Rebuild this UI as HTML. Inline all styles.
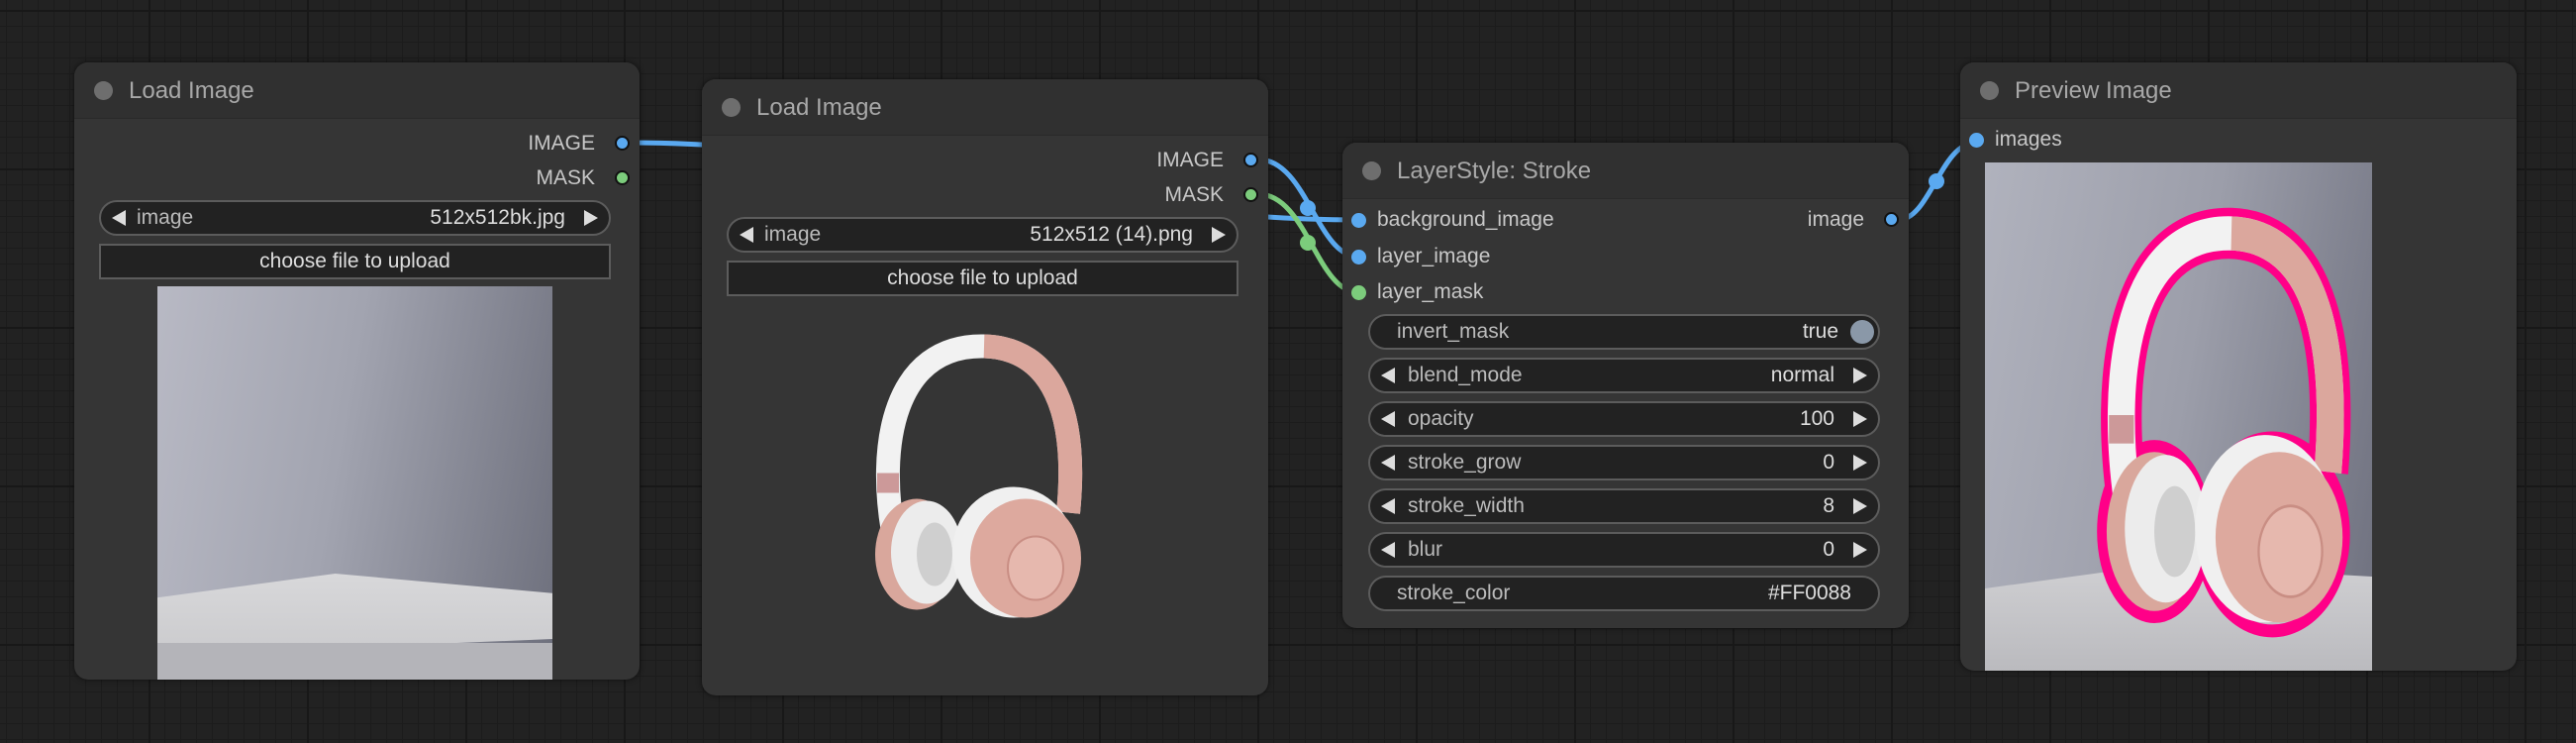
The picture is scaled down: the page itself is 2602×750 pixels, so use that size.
<!DOCTYPE html>
<html><head><meta charset="utf-8"><style>
*{box-sizing:border-box;margin:0;padding:0}
body{width:2602px;height:750px;overflow:hidden;background:#222;font-family:"Liberation Sans",Arial,sans-serif;position:relative;
background-image:linear-gradient(#181818 2px,transparent 2px),linear-gradient(90deg,#181818 2px,transparent 2px),linear-gradient(#1c1c1c 1px,transparent 1px),linear-gradient(90deg,#1c1c1c 1px,transparent 1px);
background-size:160px 160px,160px 160px,16px 16px,16px 16px;background-position:-10px 10px,-10px 10px,-10px 10px,-10px 10px}
svg{overflow:visible}
.node{position:absolute;background:#353535;border-radius:14px;box-shadow:0 0 6px rgba(0,0,0,.6);overflow:hidden}
.title{height:57px;background:#303030;border-bottom:1px solid #2a2a2a;color:#a8a8a8;font-size:24px;line-height:57px;padding-left:55px;position:relative}
.title:before{content:"";position:absolute;left:20px;top:19px;width:19px;height:19px;border-radius:50%;background:#6e6e6e}
.lbl{position:absolute;color:#c8c8c8;font-size:21px;line-height:24px}
.dot{position:absolute;width:15px;height:15px;border-radius:50%;border:2px solid #111}
.b{background:#5aa9f0}.g{background:#7ccc7c}
.w{position:absolute;height:36px;border:2px solid #5c5c5c;border-radius:18px;background:#222;color:#c8c8c8;font-size:21px;line-height:32px}
.w .l{position:absolute;left:38px;color:#bbb}.w .v{position:absolute;right:44px;color:#ddd}
.w .al{position:absolute;left:11px;top:8px;width:0;height:0;border-top:8px solid transparent;border-bottom:8px solid transparent;border-right:14px solid #ddd}
.w .ar{position:absolute;right:11px;top:8px;width:0;height:0;border-top:8px solid transparent;border-bottom:8px solid transparent;border-left:14px solid #ddd}
.btn{position:absolute;height:36px;border:2px solid #5c5c5c;background:#222;color:#ddd;font-size:21px;line-height:32px;text-align:center}
</style></head><body>
<svg width="2602" height="750" style="position:absolute;left:0;top:0">
<g fill="none" stroke-width="5">
<path d="M636 144 C 900 144, 1100 222, 1372 222" stroke="#5aa9f0"/>
<path d="M1271 161 C 1320 161, 1330 259, 1372 259" stroke="#5aa9f0"/>
<path d="M1271 196 C 1320 196, 1330 295, 1372 295" stroke="#7ccc7c"/>
<path d="M1917 222 C 1950 222, 1960 144, 1996 144" stroke="#5aa9f0"/>
</g>
<circle cx="1321" cy="210" r="8" fill="#5aa9f0"/><circle cx="1321" cy="245" r="8" fill="#7ccc7c"/>
<circle cx="1956" cy="183" r="8" fill="#5aa9f0"/>
<defs>
<symbol id="hp" viewBox="0 0 240 300" overflow="visible" preserveAspectRatio="none">
<path d="M40 220 C 20 120, 40 20, 130 22 C 200 24, 225 90, 215 190" fill="none" stroke="#f2f2f2" stroke-width="24"/>
<path d="M130 22 C 200 24, 225 90, 215 190" fill="none" stroke="#dba79d" stroke-width="24"/>
<rect x="22" y="150" width="22" height="20" fill="#c99" />
<ellipse cx="62" cy="232" rx="42" ry="56" fill="#d9a79c"/>
<ellipse cx="72" cy="230" rx="36" ry="52" fill="#ececec"/>
<ellipse cx="80" cy="232" rx="18" ry="32" fill="#cfcfcf"/>
<ellipse cx="160" cy="230" rx="62" ry="66" fill="#f0f0f0"/>
<ellipse cx="172" cy="236" rx="56" ry="60" fill="#dda99e"/>
<ellipse cx="182" cy="246" rx="28" ry="32" fill="#e6b8ae" stroke="#c98e84" stroke-width="2"/>
</symbol>
</defs>
</svg>

<div class="node" style="left:75px;top:63px;width:571px;height:623px">
<div class="title">Load Image</div>
<div class="lbl" style="right:45px;top:70px">IMAGE</div><div class="dot b" style="right:10px;top:74px"></div>
<div class="lbl" style="right:45px;top:105px">MASK</div><div class="dot g" style="right:10px;top:109px"></div>
<div class="w" style="left:25px;top:139px;width:517px"><div class="al"></div><span class="l" style="left:36px">image</span><span class="v">512x512bk.jpg</span><div class="ar"></div></div>
<div class="btn" style="left:25px;top:183px;width:517px">choose file to upload</div>
<div style="position:absolute;left:84px;top:226px;width:399px;height:397px;background:linear-gradient(100deg,#b8b9c4 0%,#a2a4b0 45%,#6d6f7c 100%);overflow:hidden">
<div style="position:absolute;left:0;top:290px;width:399px;height:110px;background:linear-gradient(#d8d8da,#c6c6c9);clip-path:polygon(0 22%,45% 0,100% 18%,100% 60%,0 75%)"></div>
<div style="position:absolute;left:0;top:360px;width:399px;height:40px;background:#b4b4b9"></div>
</div>
</div>

<div class="node" style="left:709px;top:80px;width:572px;height:622px">
<div class="title">Load Image</div>
<div class="lbl" style="right:45px;top:70px">IMAGE</div><div class="dot b" style="right:10px;top:74px"></div>
<div class="lbl" style="right:45px;top:105px">MASK</div><div class="dot g" style="right:10px;top:109px"></div>
<div class="w" style="left:25px;top:139px;width:517px"><div class="al"></div><span class="l" style="left:36px">image</span><span class="v">512x512 (14).png</span><div class="ar"></div></div>
<div class="btn" style="left:25px;top:183px;width:517px">choose file to upload</div>
<svg style="position:absolute;left:155px;top:245px" width="240" height="305" viewBox="0 0 240 300"><use href="#hp" width="240" height="300"/></svg>
</div>

<div class="node" style="left:1356px;top:144px;width:572px;height:490px">
<div class="title">LayerStyle: Stroke</div>
<div class="dot b" style="left:9px;top:71px;border:none"></div><div class="lbl" style="left:35px;top:66px">background_image</div>
<div class="lbl" style="right:45px;top:66px">image</div><div class="dot b" style="right:10px;top:70px"></div>
<div class="dot b" style="left:9px;top:108px;border:none"></div><div class="lbl" style="left:35px;top:103px">layer_image</div>
<div class="dot g" style="left:9px;top:144px;border:none"></div><div class="lbl" style="left:35px;top:139px">layer_mask</div>
<div class="w" style="left:26px;top:173px;width:517px"><span class="l" style="left:27px">invert_mask</span><span class="v" style="right:40px">true</span><div style="position:absolute;right:4px;top:4px;width:24px;height:24px;border-radius:50%;background:#8a98a8"></div></div>
<div class="w" style="left:26px;top:217px;width:517px"><div class="al"></div><span class="l">blend_mode</span><span class="v">normal</span><div class="ar"></div></div>
<div class="w" style="left:26px;top:261px;width:517px"><div class="al"></div><span class="l">opacity</span><span class="v">100</span><div class="ar"></div></div>
<div class="w" style="left:26px;top:305px;width:517px"><div class="al"></div><span class="l">stroke_grow</span><span class="v">0</span><div class="ar"></div></div>
<div class="w" style="left:26px;top:349px;width:517px"><div class="al"></div><span class="l">stroke_width</span><span class="v">8</span><div class="ar"></div></div>
<div class="w" style="left:26px;top:393px;width:517px"><div class="al"></div><span class="l">blur</span><span class="v">0</span><div class="ar"></div></div>
<div class="w" style="left:26px;top:437px;width:517px"><span class="l" style="left:27px">stroke_color</span><span class="v" style="right:27px">#FF0088</span></div>
</div>

<div class="node" style="left:1980px;top:63px;width:562px;height:614px">
<div class="title">Preview Image</div>
<div class="dot b" style="left:9px;top:71px;border:none"></div><div class="lbl" style="left:35px;top:66px">images</div>
<div style="position:absolute;left:25px;top:101px;width:391px;height:513px;background:linear-gradient(100deg,#b0b2bd 0%,#9c9eaa 50%,#6e707e 100%);overflow:hidden">
<div style="position:absolute;left:0;top:400px;width:391px;height:120px;background:linear-gradient(#d0d0d3,#b9b9bd);clip-path:polygon(0 25%,45% 5%,100% 15%,100% 100%,0 100%)"></div>
<svg style="position:absolute;left:100px;top:40px" width="275" height="430" viewBox="0 0 240 300" preserveAspectRatio="none">
<g fill="none" stroke="#ff0088" stroke-width="9">
<path d="M40 220 C 20 120, 40 20, 130 22 C 200 24, 225 90, 215 190" stroke-width="36"/>
<ellipse cx="62" cy="232" rx="46" ry="60"/>
<ellipse cx="166" cy="234" rx="64" ry="68"/>
</g>
<use href="#hp" width="240" height="300"/>
</svg>
</div>
</div>
</body></html>
